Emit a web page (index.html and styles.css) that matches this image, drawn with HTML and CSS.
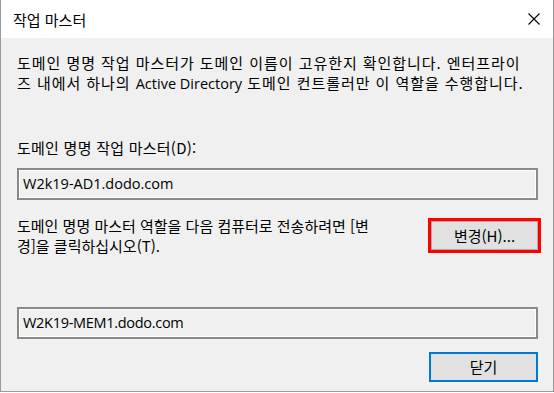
FILE: index.html
```html
<!DOCTYPE html>
<html lang="ko">
<head>
<meta charset="utf-8">
<title>작업 마스터</title>
<link rel="stylesheet" href="styles.css">
</head>
<body>
<div class="window">
  <div class="titlebar">
    <span class="title">작업 마스터</span>
    <svg class="close" width="12" height="12" viewBox="0 0 12 12" aria-label="닫기">
      <path d="M0.5 0.5 L11.5 11.5 M11.5 0.5 L0.5 11.5" stroke="#000" stroke-width="1.1" fill="none"/>
    </svg>
  </div>
  <div class="content">
    <p class="desc desc-wide">도메인 명명 작업 마스터가 도메인 이름이 고유한지 확인합니다. 엔터프라이<br>즈 내에서 하나의 <span class="latin">Active Directory</span> 도메인 컨트롤러만 이 역할을 수행합니다.</p>
    <div class="label">도메인 명명 작업 마스터(D):</div>
    <div class="field">W2k19-AD1.dodo.com</div>
    <div class="change-row">
      <p class="desc">도메인 명명 마스터 역할을 다음 컴퓨터로 전송하려면 [변<br>경]을 클릭하십시오(T).</p>
      <button class="btn highlighted">변경(H)...</button>
    </div>
    <div class="field field-target">W2K19-MEM1.dodo.com</div>
    <div class="actions">
      <button class="btn primary">닫기</button>
    </div>
  </div>
</div>
</body>
</html>
```
FILE: styles.css
```css
html, body {
  margin: 0;
  padding: 0;
  background: #ffffff;
}

body {
  font-family: "Noto Sans CJK KR", "Noto Sans", sans-serif;
  font-size: 15px;
  color: #000;
}

.window {
  width: 554px;
  height: 392px;
  box-sizing: border-box;
  border: 1px solid #9a9a9a;
  border-top: none;
  background: #f0f0f0;
  display: flex;
  flex-direction: column;
}

.titlebar {
  height: 38px;
  background: #ffffff;
  display: flex;
  align-items: center;
  padding: 0 13px 0 12px;
  flex-shrink: 0;
}

.title {
  font-size: 15px;
  line-height: 20px;
  padding-top: 1px;
}

.close {
  margin-left: auto;
  display: block;
}

.content {
  padding: 15px 15px 0 16px;
  display: flex;
  flex-direction: column;
}

.desc {
  margin: 0;
  line-height: 20px;
  white-space: nowrap;
}

.desc-wide {
  letter-spacing: 0.95px;
}

.latin {
  font-family: "Open Sans", sans-serif;
  font-size: 14.5px;
  letter-spacing: 0;
}

.label {
  margin-top: 44px;
  line-height: 20px;
  letter-spacing: 0.25px;
}

.field {
  margin-top: 10px;
  height: 32px;
  box-sizing: border-box;
  border: 2px solid #8a8a8a;
  box-shadow: inset 0 0 0 1px #ffffff;
  padding: 0 4px;
  line-height: 28px;
  font-family: "Open Sans", "Noto Sans CJK KR", sans-serif;
  font-size: 14.5px;
}

.change-row {
  margin-top: 16px;
  display: flex;
  align-items: flex-start;
  justify-content: space-between;
}

.field-target {
  margin-top: 51px;
  letter-spacing: -0.3px;
}

.btn {
  font-family: "Noto Sans CJK KR", sans-serif;
  font-size: 15px;
  color: #000;
  background: #e1e1e1;
  border: 1px solid #adadad;
  padding: 0;
  line-height: 20px;
  box-sizing: border-box;
}

.highlighted {
  margin-top: 5px;
  width: 107px;
  height: 29px;
  outline: 3px solid #ff0000;
}

.actions {
  margin-top: 13px;
  display: flex;
  justify-content: flex-end;
}

.primary {
  width: 109px;
  height: 30px;
  border: 2px solid #0078d7;
}
```
